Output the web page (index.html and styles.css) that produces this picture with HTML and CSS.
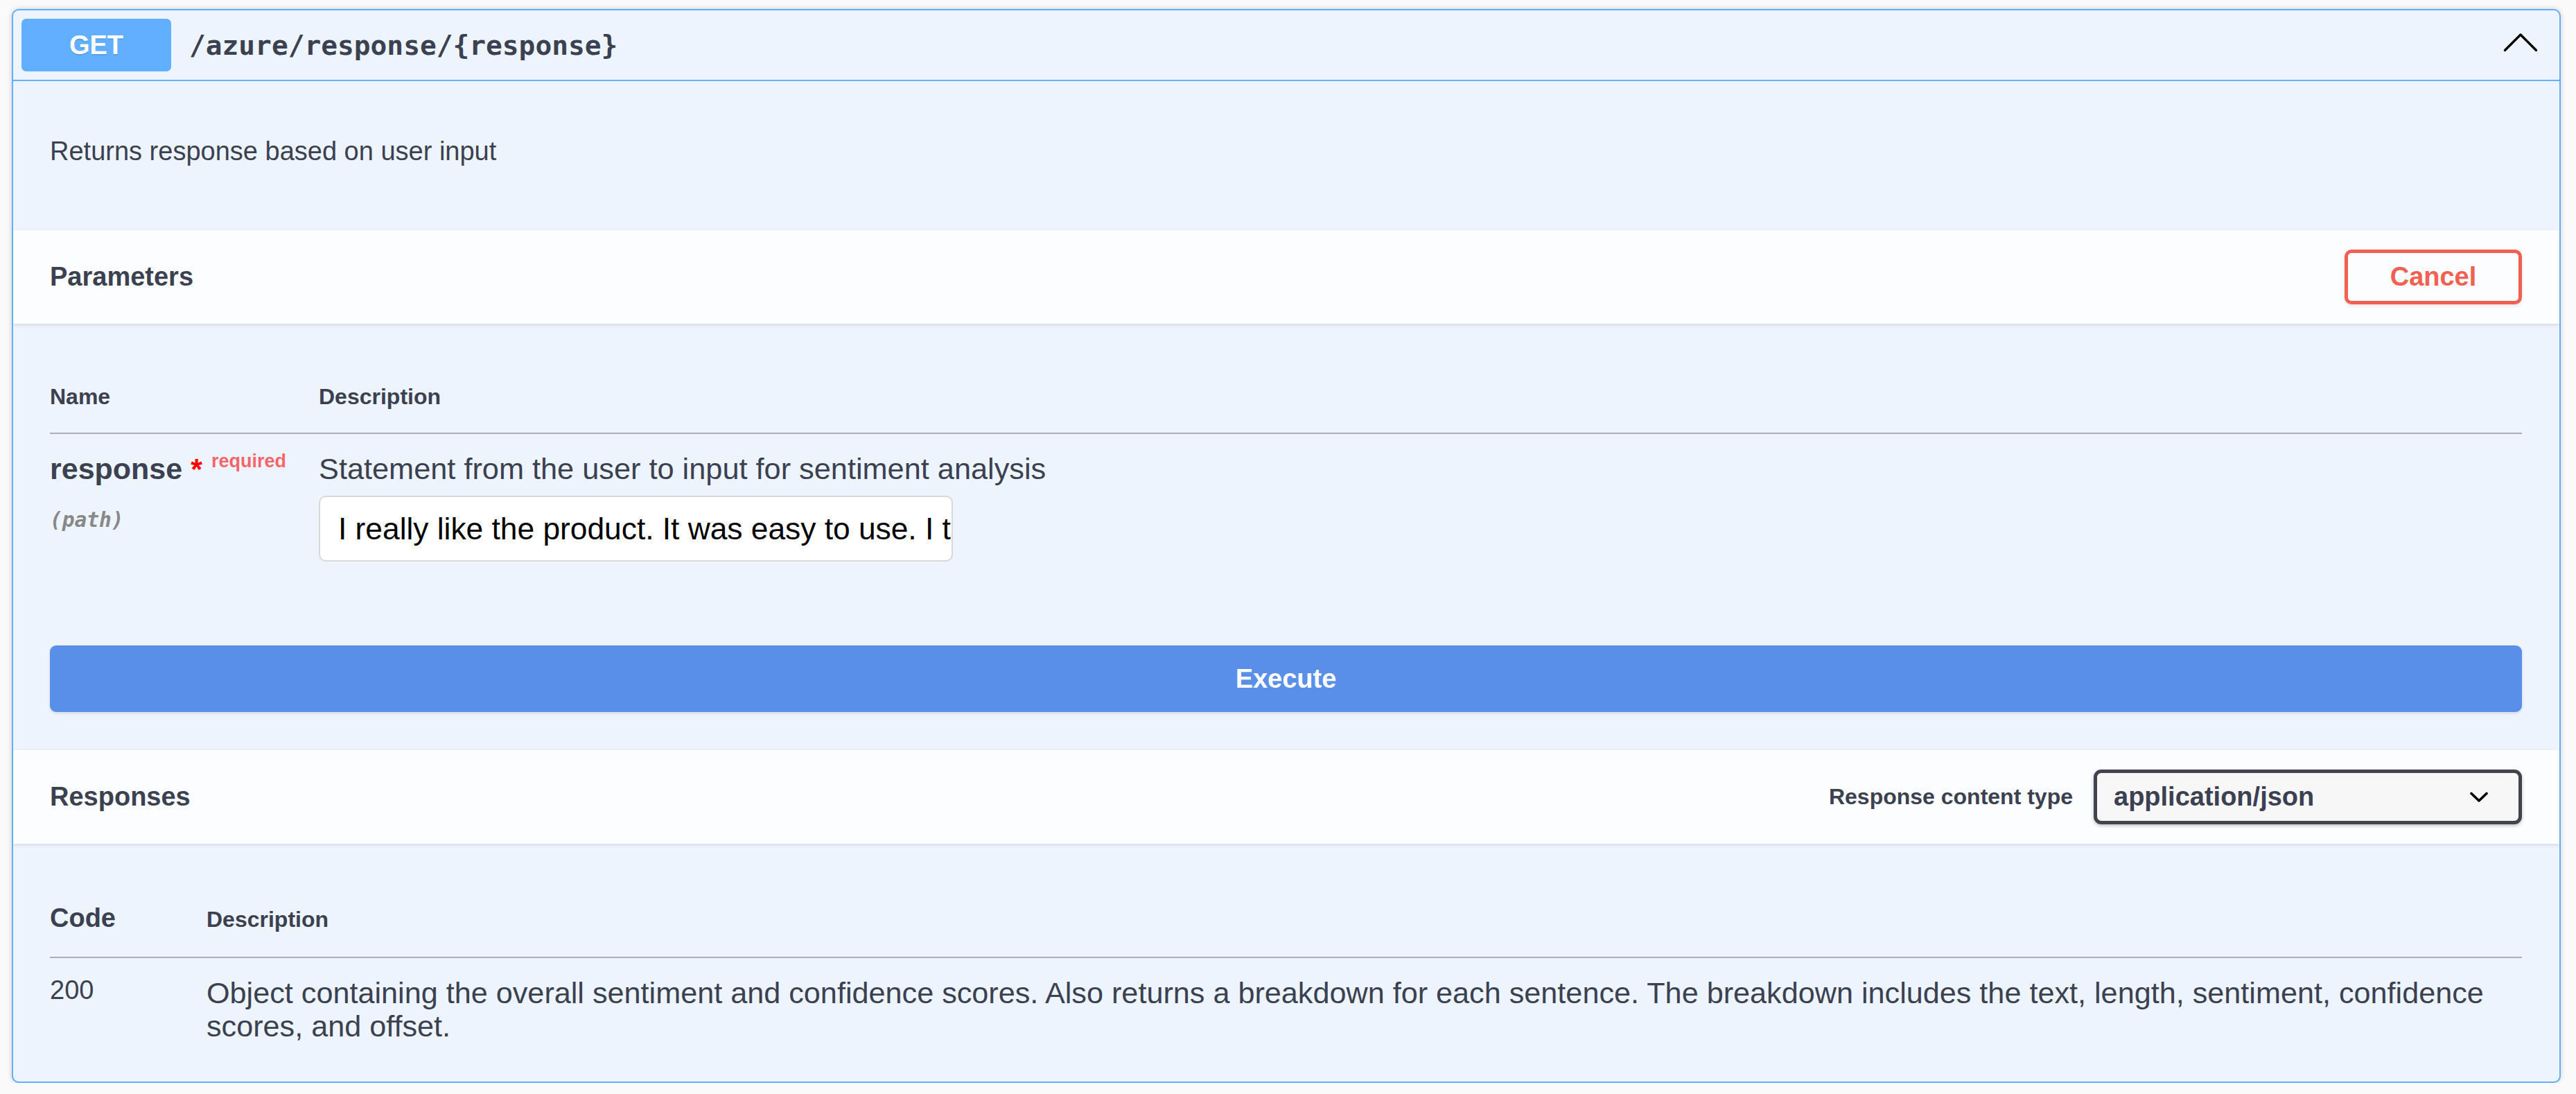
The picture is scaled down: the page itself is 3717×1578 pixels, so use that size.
FILE: index.html
```html
<!DOCTYPE html>
<html lang="en">
<head>
<meta charset="utf-8">
<title>GET /azure/response/{response}</title>
<link rel="stylesheet" href="styles.css">
</head>
<body>
<div class="opblock">
  <div class="summary">
    <span class="method">GET</span>
    <span class="path">/azure/response/{response}</span>
    <svg class="arrow" width="50" height="47" viewBox="0 0 50 47"><polyline points="2.5,30.5 25,8 47.5,30.5" fill="none" stroke="#000" stroke-width="3.4" stroke-linecap="round" stroke-linejoin="round"/></svg>
  </div>
  <div class="desc"><p>Returns response based on user input</p></div>
  <div class="section-header">
    <h4 class="title">Parameters</h4>
    <button class="cancel">Cancel</button>
  </div>
  <div class="params-body">
    <div class="ptable">
      <div class="prow phead">
        <div class="col-name">Name</div>
        <div class="col-desc">Description</div>
      </div>
      <div class="prow pbody">
        <div class="col-name">
          <div class="pname">response<span class="star">&nbsp;*</span><span class="req">required</span></div>
          <div class="pin">(path)</div>
        </div>
        <div class="col-desc">
          <p class="pdesc">Statement from the user to input for sentiment analysis</p>
          <input class="pinput" type="text" value="I really like the product. It was easy to use. I think it is great.">
        </div>
      </div>
    </div>
    <button class="execute">Execute</button>
  </div>
  <div class="section-header resp-header">
    <h4 class="title">Responses</h4>
    <div class="ctype">
      <span class="ctype-label">Response content type</span>
      <div class="select">
        <span>application/json</span>
        <svg width="26" height="16" viewBox="0 0 26 16"><polyline points="2,2.5 13,13 24,2.5" fill="none" stroke="#000" stroke-width="3.6" stroke-linecap="round" stroke-linejoin="round"/></svg>
      </div>
    </div>
  </div>
  <div class="resp-body">
    <div class="rrow rhead">
      <div class="rcode">Code</div>
      <div class="rdesc-h">Description</div>
    </div>
    <div class="rrow rbody">
      <div class="rcode-v">200</div>
      <div class="rdesc">Object containing the overall sentiment and confidence scores. Also returns a breakdown for each sentence. The breakdown includes the text, length, sentiment, confidence scores, and offset.</div>
    </div>
  </div>
</div>
</body>
</html>
```

FILE: styles.css
```css
html, body {
  margin: 0;
  padding: 0;
  background: #fafafa;
}
body {
  font-family: "Liberation Sans", Arial, sans-serif;
  color: #3b4151;
  padding: 13px 22px 0 17px;
}
.opblock {
  border: 2px solid #61affe;
  border-radius: 10px;
  background: #edf4fe;
  box-shadow: 0 0 7px rgba(0, 0, 0, 0.19);
  overflow: hidden;
}
.summary {
  display: flex;
  align-items: center;
  padding: 12px;
  border-bottom: 2px solid #61affe;
}
.method {
  width: 216px;
  height: 76px;
  display: flex;
  align-items: center;
  justify-content: center;
  background: #61affe;
  border-radius: 7px;
  color: #fff;
  font-weight: bold;
  font-size: 38px;
  text-shadow: 0 2px 0 rgba(0, 0, 0, 0.1);
}
.path {
  flex: 1;
  padding-left: 26px;
  font-family: "DejaVu Sans Mono", monospace;
  font-weight: 600;
  font-size: 39.5px;
  color: #3b4151;
}
.arrow {
  margin-right: 19px;
  display: block;
}
.desc {
  padding: 80px 54px 92px 53px;
}
.desc p {
  margin: 0;
  font-size: 38px;
  line-height: normal;
}
.section-header {
  display: flex;
  align-items: center;
  justify-content: space-between;
  padding: 28px 54px 28px 53px;
  background: #fcfdff;
  box-shadow: 0 2px 5px rgba(0, 0, 0, 0.1);
  position: relative;
}
.title {
  margin: 0;
  font-size: 38px;
  font-weight: bold;
}
.cancel {
  width: 256px;
  height: 79px;
  border: 5px solid #f16151;
  border-radius: 10px;
  background: transparent;
  color: #f16151;
  font-family: "Liberation Sans", Arial, sans-serif;
  font-weight: bold;
  font-size: 38px;
  box-shadow: 0 2px 5px rgba(0, 0, 0, 0.1);
  padding: 0;
}
.params-body {
  padding: 87px 54px 55px 53px;
}
.prow {
  display: flex;
}
.col-name {
  width: 388px;
  flex: none;
}
.col-desc {
  flex: 1;
}
.phead {
  font-size: 32px;
  font-weight: bold;
  padding-bottom: 33px;
  border-bottom: 2px solid #abafb9;
}
.pbody {
  padding-top: 26px;
}
.pname {
  font-size: 43px;
  font-weight: bold;
  line-height: normal;
  white-space: nowrap;
}
.star {
  color: #ff0000;
}
.req {
  position: relative;
  top: -17px;
  padding-left: 13px;
  font-size: 27px;
  font-weight: bold;
  color: rgba(255, 0, 0, 0.6);
}
.pin {
  margin-top: 32px;
  font-family: "DejaVu Sans Mono", monospace;
  font-style: italic;
  font-weight: bold;
  font-size: 29.5px;
  color: #888888;
  line-height: normal;
}
.pdesc {
  margin: 0;
  font-size: 43.3px;
  line-height: normal;
}
.pinput {
  display: block;
  box-sizing: border-box;
  margin-top: 14px;
  width: 915px;
  height: 95px;
  padding: 0 0 0 26px;
  border: 2px solid #d9d9d9;
  border-radius: 10px;
  background: #fff;
  color: #000;
  font-family: "Liberation Sans", Arial, sans-serif;
  font-size: 44.3px;
  line-height: normal;
  outline: none;
}
.execute {
  display: block;
  width: 100%;
  margin-top: 121px;
  padding: 26px 0;
  border: none;
  border-radius: 9px;
  background: #598fe9;
  color: #fff;
  font-family: "Liberation Sans", Arial, sans-serif;
  font-weight: bold;
  font-size: 38px;
  line-height: 44px;
  box-shadow: 0 2px 5px rgba(0, 0, 0, 0.1);
}
.ctype {
  display: flex;
  align-items: center;
  gap: 30px;
}
.ctype-label {
  font-size: 32px;
  font-weight: bold;
}
.select {
  box-sizing: border-box;
  width: 618px;
  height: 79px;
  display: flex;
  align-items: center;
  justify-content: space-between;
  padding: 0 44px 0 24px;
  border: 5px solid #41444e;
  border-radius: 11px;
  background: #f7f7f7;
  box-shadow: 0 2px 5px rgba(0, 0, 0, 0.25);
  font-size: 38px;
  font-weight: bold;
  color: #3b4151;
}
.select svg {
  display: block;
}
.resp-body {
  padding: 86px 54px 56px 53px;
}
.rrow {
  display: flex;
}
.rhead {
  align-items: baseline;
  padding-bottom: 34px;
  border-bottom: 2px solid #abafb9;
}
.rcode {
  width: 226px;
  flex: none;
  font-size: 38px;
  font-weight: bold;
}
.rdesc-h {
  font-size: 32px;
  font-weight: bold;
}
.rbody {
  padding-top: 25px;
}
.rcode-v {
  width: 226px;
  flex: none;
  font-size: 38px;
  line-height: normal;
}
.rdesc {
  flex: 1;
  font-size: 43.2px;
  line-height: 48px;
  padding-top: 1px;
}
```
